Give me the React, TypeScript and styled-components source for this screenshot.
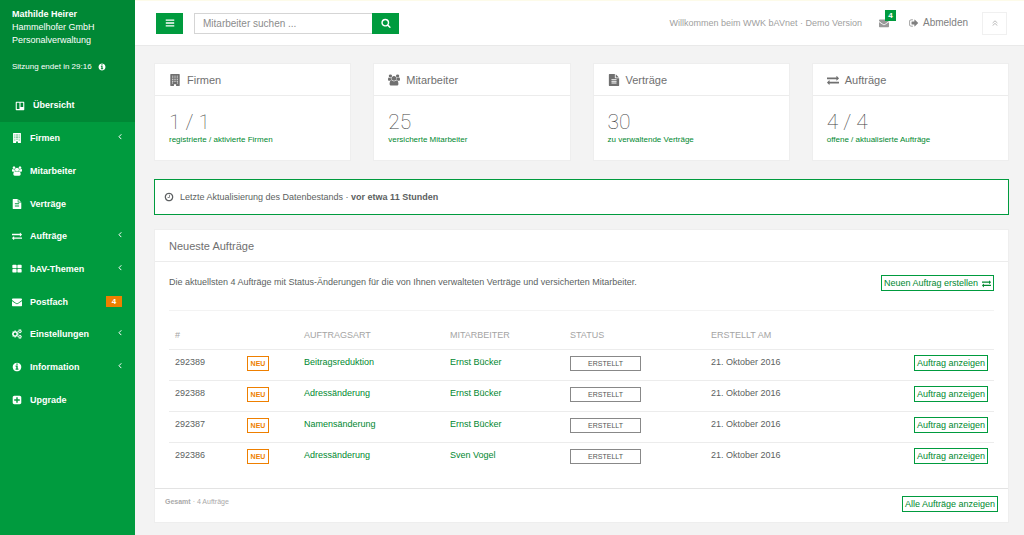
import React from 'react';
import styled, { createGlobalStyle } from 'styled-components';

const green = '#009b3e';
const greenDark = '#008835';
const greenText = '#00882f';
const orange = '#ee7f00';
const line = '#ececec';

const GlobalStyle = createGlobalStyle`
  * { box-sizing: border-box; }
  body {
    margin: 0;
    background: #f3f3f3;
    color: #5c5f61;
    font: 9px/14px "Liberation Sans", Arial, sans-serif;
  }
  a { color: inherit; text-decoration: none; }
  button, input { font-family: inherit; margin: 0; }
  h1, h2, p, ul { margin: 0; padding: 0; }
`;

const circle =
  'M1664 896q0 209-103 385.5t-279.5 279.5-385.5 103-385.5-103-279.5-279.5-103-385.5 103-385.5 279.5-279.5 385.5-103 385.5 103 279.5 279.5 103 385.5z';

const smallGear =
  'v140q0 16-149 31-12 27-30 52 51 113 51 138 0 4-4 7-122 71-124 71-8 0-46-47t-52-68q-20 2-30 2t-30-2q-14 21-52 68t-46 47q-2 0-124-71-4-3-4-7 0-25 51-138-18-25-30-52-149-15-149-31v-140q0-16 149-31 13-29 30-52-51-113-51-138 0-4 4-7 4-2 35-20t59-34 30-16q8 0 46 46.5t52 67.5q20-2 30-2t30 2q51-71 92-112l6-2q4 0 124 70 4 3 4 7 0 25-51 138 17 23 30 52 149 15 149 31z';

const paths = {
  board:
    'M256 128h1280q128 0 128 128v1280q0 128-128 128h-1280q-128 0-128-128v-1280q0-128 128-128zM320 352v1056q0 32 32 32h448v-1120h-448q-32 0-32 32zM992 320v736h448q32 0 32-32v-672q0-32-32-32z',
  building:
    'M256 0h1280q64 0 64 64v1664q0 64-64 64h-480v-256h-320v256h-480q-64 0-64-64v-1664q0-64 64-64zM448 256v128h128v-128zM704 256v128h128v-128zM960 256v128h128v-128zM1216 256v128h128v-128zM448 512v128h128v-128zM704 512v128h128v-128zM960 512v128h128v-128zM1216 512v128h128v-128zM448 768v128h128v-128zM704 768v128h128v-128zM960 768v128h128v-128zM1216 768v128h128v-128zM448 1024v128h128v-128zM704 1024v128h128v-128zM960 1024v128h128v-128zM1216 1024v128h128v-128zM448 1280v128h128v-128zM1216 1280v128h128v-128z',
  users:
    'M529 896q-162 5-265 128h-134q-82 0-138-40.5t-56-118.5q0-353 124-353 6 0 43.5 21t97.5 42.5 119 21.5q67 0 133-23-5 37-5 66 0 159 81 288zm1071 637q0 120-73 189.5t-194 69.5h-874q-121 0-194-69.5t-73-189.5q0-53 3.5-103.5t14-109 26.5-108.5 43-97.5 62-81 85.5-53.5 111.5-20q10 0 43 21.5t73 48 107 48 135 21.5 135-21.5 107-48 73-48 43-21.5q61 0 111.5 20t85.5 53.5 62 81 43 97.5 26.5 108.5 14 109 3.5 103.5zm-1024-1277q0 106-75 181t-181 75-181-75-75-181 75-181 181-75 181 75 75 181zm704 384q0 159-112.5 271.5t-271.5 112.5-271.5-112.5-112.5-271.5 112.5-271.5 271.5-112.5 271.5 112.5 112.5 271.5zm576 225q0 78-56 118.5t-138 40.5h-134q-103-123-265-128 81-129 81-288 0-29-5-66 66 23 133 23 59 0 119-21.5t97.5-42.5 43.5-21q124 0 124 353zm-128-609q0 106-75 181t-181 75-181-75-75-181 75-181 181-75 181 75 75 181z',
  file:
    'M1596 476q14 14 28 36h-472v-472q22 14 36 28zm-476 164h544v1056q0 40-28 68t-68 28h-1344q-40 0-68-28t-28-68v-1600q0-40 28-68t68-28h800v544q0 40 28 68t68 28zm160 736v-64q0-14-9-23t-23-9h-704q-14 0-23 9t-9 23v64q0 14 9 23t23 9h704q14 0 23-9t9-23zm0-256v-64q0-14-9-23t-23-9h-704q-14 0-23 9t-9 23v64q0 14 9 23t23 9h704q14 0 23-9t9-23zm0-256v-64q0-14-9-23t-23-9h-704q-14 0-23 9t-9 23v64q0 14 9 23t23 9h704q14 0 23-9t9-23z',
  exchange:
    'M1792 1184v192q0 13-9.5 22.5t-22.5 9.5h-1376v192q0 13-9.5 22.5t-22.5 9.5q-12 0-24-10l-319-320q-9-9-9-22 0-14 9-23l320-320q9-9 23-9 13 0 22.5 9.5t9.5 22.5v192h1376q13 0 22.5 9.5t9.5 22.5zm0-544q0 14-9 23l-320 320q-9 9-23 9-13 0-22.5-9.5t-9.5-22.5v-192h-1376q-13 0-22.5-9.5t-9.5-22.5v-192q0-13 9.5-22.5t22.5-9.5h1376v-192q0-14 9-23t23-9q12 0 24 10l319 319q9 9 9 23z',
  grid:
    'M832 1024v384q0 52-38 90t-90 38h-512q-52 0-90-38t-38-90v-384q0-52 38-90t90-38h512q52 0 90 38t38 90zm0-768v384q0 52-38 90t-90 38h-512q-52 0-90-38t-38-90v-384q0-52 38-90t90-38h512q52 0 90 38t38 90zm896 768v384q0 52-38 90t-90 38h-512q-52 0-90-38t-38-90v-384q0-52 38-90t90-38h512q52 0 90 38t38 90zm0-768v384q0 52-38 90t-90 38h-512q-52 0-90-38t-38-90v-384q0-52 38-90t90-38h512q52 0 90 38t38 90z',
  envelope:
    'M1792 710v794q0 66-47 113t-113 47h-1472q-66 0-113-47t-47-113v-794q44 49 101 87 362 246 497 345 57 42 92.5 65.5t94.5 48 110 24.5h2q51 0 110-24.5t94.5-48 92.5-65.5q170-123 498-345 57-39 100-87zm0-294q0 79-49 151t-122 123q-376 261-468 325-10 7-42.5 31t-54 38.5-52 32.5-57.5 27-50 9h-2q-23 0-50-9t-57.5-27-52-32.5-54-38.5-42.5-31q-91-64-262-182.5t-205-142.5q-62-42-117-115.5t-55-136.5q0-78 41.5-130t118.5-52h1472q65 0 112.5 47t47.5 113z',
  cogs:
    'M832 896q0-106-75-181t-181-75-181 75-75 181 75 181 181 75 181-75 75-181zm768 512q0-52-38-90t-90-38-90 38-38 90q0 53 37.5 90.5t90.5 37.5 90.5-37.5 37.5-90.5zm0-1024q0-52-38-90t-90-38-90 38-38 90q0 53 37.5 90.5t90.5 37.5 90.5-37.5 37.5-90.5zm-384 421v185q0 10-7 19.5t-16 10.5l-155 24q-11 35-32 76 34 48 90 115 7 11 7 20 0 12-7 19-23 30-82.5 89.5t-78.5 59.5q-11 0-21-7l-115-90q-37 19-77 31-11 108-23 155-7 24-30 24h-186q-11 0-20-7.5t-10-17.5l-23-153q-34-10-75-31l-118 89q-7 7-20 7-11 0-21-8-144-133-144-160 0-9 7-19 10-14 41-53t47-61q-23-44-35-82l-152-24q-10-1-17-9.5t-7-19.5v-185q0-10 7-19.5t16-10.5l155-24q11-35 32-76-34-48-90-115-7-11-7-20 0-12 7-20 22-30 82-89t79-59q11 0 21 7l115 90q34-18 77-32 11-108 23-154 7-24 30-24h186q11 0 20 7.5t10 17.5l23 153q34 10 75 31l118-89q8-7 20-7 11 0 21 8 144 133 144 160 0 8-7 19-12 16-42 54t-45 60q23 48 34 82l152 23q10 2 17 10.5t7 19.5z' +
    'M1856 1338' + smallGear + 'M1856 314' + smallGear,
  info:
    'M1152 1376v-160q0-14-9-23t-23-9h-96v-512q0-14-9-23t-23-9h-320q-14 0-23 9t-9 23v160q0 14 9 23t23 9h96v320h-96q-14 0-23 9t-9 23v160q0 14 9 23t23 9h448q14 0 23-9t9-23zm-128-896v-160q0-14-9-23t-23-9h-192q-14 0-23 9t-9 23v160q0 14 9 23t23 9h192q14 0 23-9t9-23z' +
    circle,
  plus:
    'M1408 960v-128q0-26-19-45t-45-19h-320v-320q0-26-19-45t-45-19h-128q-26 0-45 19t-19 45v320h-320q-26 0-45 19t-19 45v128q0 26 19 45t45 19h320v320q0 26 19 45t45 19h128q26 0 45-19t19-45v-320h320q26 0 45-19t19-45zm256-544v960q0 119-84.5 203.5t-203.5 84.5h-960q-119 0-203.5-84.5t-84.5-203.5v-960q0-119 84.5-203.5t203.5-84.5h960q119 0 203.5 84.5t84.5 203.5z',
  clock:
    'M1024 544v448q0 14-9 23t-23 9h-320q-14 0-23-9t-9-23v-64q0-14 9-23t23-9h224v-352q0-14 9-23t23-9h64q14 0 23 9t9 23zm416 352q0-148-73-273t-198-198-273-73-273 73-198 198-73 273 73 273 198 198 273 73 273-73 198-198 73-273z' +
    circle,
  bars:
    'M1664 1344v128q0 26-19 45t-45 19h-1408q-26 0-45-19t-19-45v-128q0-26 19-45t45-19h1408q26 0 45 19t19 45zm0-512v128q0 26-19 45t-45 19h-1408q-26 0-45-19t-19-45v-128q0-26 19-45t45-19h1408q26 0 45 19t19 45zm0-512v128q0 26-19 45t-45 19h-1408q-26 0-45-19t-19-45v-128q0-26 19-45t45-19h1408q26 0 45 19t19 45z',
  search:
    'M1216 832q0-185-131.5-316.5t-316.5-131.5-316.5 131.5-131.5 316.5 131.5 316.5 316.5 131.5 316.5-131.5 131.5-316.5zm512 832q0 52-38 90t-90 38q-54 0-90-38l-343-342q-179 124-399 124-143 0-273.5-55.5t-225-150-150-225-55.5-273.5 55.5-273.5 150-225 225-150 273.5-55.5 273.5 55.5 225 150 150 225 55.5 273.5q0 220-124 399l343 343q37 37 37 90z',
  signOut:
    'M704 1440q0 4 1 20t.5 26.5-3 23.5-10 19.5-20.5 6.5h-320q-119 0-203.5-84.5t-84.5-203.5v-704q0-119 84.5-203.5t203.5-84.5h320q13 0 22.5 9.5t9.5 22.5q0 4 1 20t.5 26.5-3 23.5-10 19.5-20.5 6.5h-320q-66 0-113 47t-47 113v704q0 66 47 113t113 47h312l11.5 1 11.5 3 8 5.5 7 9 2 13.5zm928-544q0 26-19 45l-544 544q-19 19-45 19t-45-19-19-45v-288h-448q-26 0-45-19t-19-45v-384q0-26 19-45t45-19h448v-288q0-26 19-45t45-19 45 19l544 544q19 19 19 45z',
};
type IconName = keyof typeof paths;

const viewBoxes: Partial<Record<IconName, string>> = {
  users: '-64 0 1920 1792',
  cogs: '0 0 1856 1792',
};

const Svg = styled.svg`
  display: block;
  flex: none;
  fill: currentColor;
  fill-rule: evenodd;
`;

function Icon({ name, size = 10 }: { name: IconName; size?: number }) {
  return (
    <Svg width={size} height={size} viewBox={viewBoxes[name] ?? '0 0 1792 1792'} aria-hidden="true">
      <path d={paths[name]} />
    </Svg>
  );
}

const Chevron = styled.svg`
  display: block;
  flex: none;
  fill: none;
  stroke: currentColor;
`;

const Shell = styled.div`
  display: grid;
  grid-template-columns: 135px minmax(0, 1fr);
  min-height: 100vh;
`;

const Sidebar = styled.aside`
  background: ${green};
  color: #fff;
`;

const Profile = styled.div`
  background: ${greenDark};
  padding: 8px 12px 10px;
  line-height: 13px;
`;

const Session = styled.p`
  display: flex;
  align-items: center;
  gap: 6px;
  margin-top: 13px;
  font-size: 8px;
  line-height: 13px;
`;

const CurrentLink = styled.a`
  display: flex;
  align-items: center;
  gap: 8px;
  margin: 26px 0 0 3px;
  font-weight: bold;
`;

const NavList = styled.ul`
  display: grid;
  grid-auto-rows: 1fr;
  height: 294px;
  list-style: none;
`;

const NavLink = styled.a`
  display: flex;
  align-items: center;
  height: 100%;
  gap: 8px;
  padding: 0 13px 0 12px;
  font-weight: bold;
  & > span { flex: 1; }
`;

const NavCount = styled.b`
  width: 16px;
  background: ${orange};
  font-size: 8px;
  line-height: 11px;
  text-align: center;
`;

const Main = styled.div`
  background: #f3f3f3;
`;

const TopBar = styled.header`
  display: flex;
  align-items: center;
  height: 46px;
  padding: 0 17px 0 21px;
  background: #fff;
  border-top: 1px solid #fdfbe9;
  border-bottom: 1px solid #e9e9e9;
`;

const SolidButton = styled.button`
  display: grid;
  place-items: center;
  width: 27px;
  height: 21px;
  padding: 0;
  border: 0;
  background: ${green};
  color: #fff;
`;

const Search = styled.form`
  display: flex;
  margin-left: 11px;
`;

const SearchInput = styled.input`
  width: 178px;
  height: 21px;
  padding: 0 8px;
  border: 1px solid #d5d5d5;
  border-right: 0;
  border-radius: 0;
  font-size: 10px;
  color: #676a6c;
  &::placeholder { color: #8c8c8c; opacity: 1; }
`;

const Account = styled.div`
  display: flex;
  align-items: center;
  margin-left: auto;
  color: #999;
`;

const Welcome = styled.span`
  color: #a0a0a0;
`;

const MailLink = styled.a`
  position: relative;
  margin-left: 17px;
`;

const MailCount = styled.b`
  position: absolute;
  left: 6px;
  top: -8px;
  width: 11px;
  background: ${green};
  color: #fff;
  font-size: 8px;
  line-height: 11px;
  text-align: center;
`;

const LogoutLink = styled.a`
  display: flex;
  align-items: center;
  gap: 4px;
  margin-left: 20px;
  color: #808080;
  font-size: 10px;
`;

const CollapseButton = styled.button`
  display: grid;
  place-items: center;
  width: 25px;
  height: 23px;
  margin-left: 14px;
  padding: 0;
  border: 1px solid #f0f0f0;
  background: #fff;
  color: #bbb;
`;

const Content = styled.main`
  padding: 17px 15px 13px 19px;
`;

const Cards = styled.section`
  display: grid;
  grid-template-columns: repeat(4, 1fr);
  gap: 22px;
`;

const Panel = styled.section`
  background: #fff;
  border: 1px solid #eee;
`;

const PanelTitle = styled.h2`
  display: flex;
  align-items: center;
  gap: 6px;
  height: 32px;
  padding: 0 14px;
  border-bottom: 1px solid ${line};
  font-size: 11px;
  font-weight: normal;
  color: #707070;
`;

const CardBody = styled.div`
  padding: 14px 14px 14px;
`;

const Figure = styled.p`
  font: 100 21px/24px Roboto, "Liberation Sans", sans-serif;
  color: #444;
`;

const CardLink = styled.a`
  display: block;
  color: ${greenText};
  font-size: 8px;
  line-height: 12px;
`;

const Notice = styled.p`
  display: flex;
  align-items: center;
  gap: 6px;
  height: 36px;
  margin: 18px 0 14px;
  padding: 0 9px;
  background: #fff;
  border: 1px solid ${green};
`;

const PanelBody = styled.div`
  padding: 13px 14px 15px;
`;

const Intro = styled.div`
  display: flex;
  justify-content: space-between;
  align-items: flex-start;
  height: 36px;
  border-bottom: 1px solid #f3f3f3;
`;

const OutlineButton = styled.button`
  display: inline-flex;
  align-items: center;
  gap: 4px;
  height: 16px;
  padding: 0 2px;
  border: 1px solid ${green};
  background: #fff;
  color: ${greenText};
  font-size: 9px;
  line-height: 14px;
  white-space: nowrap;
`;

const OrderTable = styled.table`
  width: 100%;
  margin-top: 12px;
  border-collapse: collapse;
  table-layout: fixed;
  th, td { padding: 5px 6px 0; text-align: left; vertical-align: top; }
  th {
    height: 26px;
    color: #a4a4a4;
    font-weight: normal;
    text-transform: uppercase;
  }
  td { height: 31px; border-top: 1px solid ${line}; }
  td:last-child { text-align: right; }
  td a { color: ${greenText}; }
`;

const Column = styled.col<{ $width?: number }>`
  width: ${(p) => (p.$width ? `${p.$width}px` : 'auto')};
`;

const Tag = styled.span<{ $wide?: boolean }>`
  display: block;
  width: ${(p) => (p.$wide ? 71 : 22)}px;
  margin-top: 1px;
  border: 1px solid ${(p) => (p.$wide ? '#888' : orange)};
  color: ${(p) => (p.$wide ? '#555' : orange)};
  font-size: 7px;
  font-weight: ${(p) => (p.$wide ? 'normal' : 'bold')};
  line-height: 13px;
  text-align: center;
`;

const PanelFooter = styled.footer`
  display: flex;
  justify-content: space-between;
  align-items: flex-start;
  height: 34px;
  padding: 7px 10px;
  border-top: 1px solid #e3e3e3;
  color: #aaa;
  font-size: 7px;
  line-height: 12px;
`;

const nav: { label: string; icon: IconName; open?: boolean; count?: number }[] = [
  { label: 'Firmen', icon: 'building', open: true },
  { label: 'Mitarbeiter', icon: 'users' },
  { label: 'Verträge', icon: 'file' },
  { label: 'Aufträge', icon: 'exchange', open: true },
  { label: 'bAV-Themen', icon: 'grid', open: true },
  { label: 'Postfach', icon: 'envelope', count: 4 },
  { label: 'Einstellungen', icon: 'cogs', open: true },
  { label: 'Information', icon: 'info', open: true },
  { label: 'Upgrade', icon: 'plus' },
];

const cards: { title: string; icon: IconName; value: string; note: string }[] = [
  { title: 'Firmen', icon: 'building', value: '1 / 1', note: 'registrierte / aktivierte Firmen' },
  { title: 'Mitarbeiter', icon: 'users', value: '25', note: 'versicherte Mitarbeiter' },
  { title: 'Verträge', icon: 'file', value: '30', note: 'zu verwaltende Verträge' },
  { title: 'Aufträge', icon: 'exchange', value: '4 / 4', note: 'offene / aktualisierte Aufträge' },
];

const orders = [
  { id: '292389', kind: 'Beitragsreduktion', person: 'Ernst Bücker' },
  { id: '292388', kind: 'Adressänderung', person: 'Ernst Bücker' },
  { id: '292387', kind: 'Namensänderung', person: 'Ernst Bücker' },
  { id: '292386', kind: 'Adressänderung', person: 'Sven Vogel' },
];

export default function App() {
  return (
    <>
      <GlobalStyle />
      <Shell>
        <Sidebar>
          <Profile>
            <b>Mathilde Heirer</b>
            <p>Hammelhofer GmbH</p>
            <p>Personalverwaltung</p>
            <Session>
              Sitzung endet in 29:16 <Icon name="info" size={8} />
            </Session>
            <CurrentLink href="#">
              <Icon name="board" />
              Übersicht
            </CurrentLink>
          </Profile>
          <nav>
            <NavList>
              {nav.map((item) => (
                <li key={item.label}>
                  <NavLink href="#">
                    <Icon name={item.icon} />
                    <span>{item.label}</span>
                    {item.open && (
                      <Chevron width="4" height="8" viewBox="0 0 4 8" aria-hidden="true">
                        <path d="M3.3 .3 1 2.7 3.3 5.1" />
                      </Chevron>
                    )}
                    {item.count && <NavCount>{item.count}</NavCount>}
                  </NavLink>
                </li>
              ))}
            </NavList>
          </nav>
        </Sidebar>
        <Main>
          <TopBar>
            <SolidButton type="button" aria-label="Menü">
              <Icon name="bars" />
            </SolidButton>
            <Search onSubmit={(e) => e.preventDefault()}>
              <SearchInput type="text" placeholder="Mitarbeiter suchen ..." aria-label="Mitarbeiter suchen" />
              <SolidButton type="submit" aria-label="Suchen">
                <Icon name="search" />
              </SolidButton>
            </Search>
            <Account>
              <Welcome>Willkommen beim WWK bAVnet · Demo Version</Welcome>
              <MailLink href="#" aria-label="Postfach">
                <Icon name="envelope" />
                <MailCount>4</MailCount>
              </MailLink>
              <LogoutLink href="#">
                <Icon name="signOut" />
                Abmelden
              </LogoutLink>
              <CollapseButton type="button" aria-label="Nach oben">
                <Chevron width="6" height="6" viewBox="0 0 6 6" aria-hidden="true">
                  <path d="M.6 3 3 .8 5.4 3M.6 5.6 3 3.4 5.4 5.6" />
                </Chevron>
              </CollapseButton>
            </Account>
          </TopBar>
          <Content>
            <Cards>
              {cards.map((card) => (
                <Panel key={card.title}>
                  <PanelTitle>
                    <Icon name={card.icon} size={12} />
                    {card.title}
                  </PanelTitle>
                  <CardBody>
                    <Figure>{card.value}</Figure>
                    <CardLink href="#">{card.note}</CardLink>
                  </CardBody>
                </Panel>
              ))}
            </Cards>
            <Notice>
              <Icon name="clock" />
              <span>
                Letzte Aktualisierung des Datenbestands · <b>vor etwa 11 Stunden</b>
              </span>
            </Notice>
            <Panel>
              <PanelTitle>Neueste Aufträge</PanelTitle>
              <PanelBody>
                <Intro>
                  <p>
                    Die aktuellsten 4 Aufträge mit Status-Änderungen für die von Ihnen verwalteten Verträge und
                    versicherten Mitarbeiter.
                  </p>
                  <OutlineButton type="button">
                    Neuen Auftrag erstellen <Icon name="exchange" size={9} />
                  </OutlineButton>
                </Intro>
                <OrderTable>
                  <colgroup>
                    <Column $width={72} />
                    <Column $width={57} />
                    <Column $width={146} />
                    <Column $width={120} />
                    <Column $width={141} />
                    <Column />
                    <Column $width={100} />
                  </colgroup>
                  <thead>
                    <tr>
                      <th>#</th>
                      <th aria-label="Neu" />
                      <th>Auftragsart</th>
                      <th>Mitarbeiter</th>
                      <th>Status</th>
                      <th>Erstellt am</th>
                      <th aria-label="Aktion" />
                    </tr>
                  </thead>
                  <tbody>
                    {orders.map((order) => (
                      <tr key={order.id}>
                        <td>{order.id}</td>
                        <td>
                          <Tag>NEU</Tag>
                        </td>
                        <td>
                          <a href="#">{order.kind}</a>
                        </td>
                        <td>
                          <a href="#">{order.person}</a>
                        </td>
                        <td>
                          <Tag $wide>ERSTELLT</Tag>
                        </td>
                        <td>21. Oktober 2016</td>
                        <td>
                          <OutlineButton type="button">Auftrag anzeigen</OutlineButton>
                        </td>
                      </tr>
                    ))}
                  </tbody>
                </OrderTable>
              </PanelBody>
              <PanelFooter>
                <span>
                  <b>Gesamt</b> · 4 Aufträge
                </span>
                <OutlineButton type="button">Alle Aufträge anzeigen</OutlineButton>
              </PanelFooter>
            </Panel>
          </Content>
        </Main>
      </Shell>
    </>
  );
}
